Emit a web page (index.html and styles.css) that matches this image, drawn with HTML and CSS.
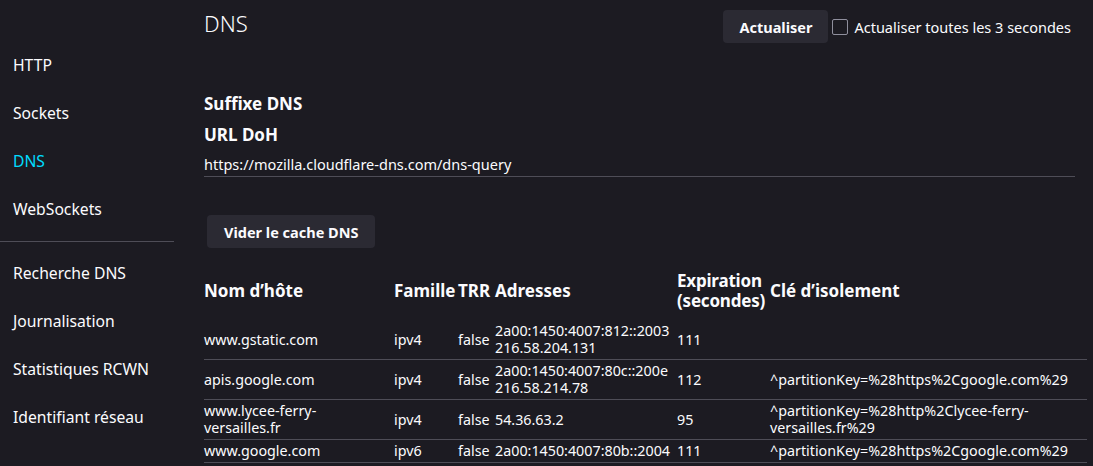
FILE: index.html
```html
<!DOCTYPE html>
<html lang="fr">
<head>
<meta charset="utf-8">
<title>about:networking</title>
<link rel="stylesheet" href="styles.css">
</head>
<body>
<div class="page">
  <nav class="sidebar">
    <div class="cat">HTTP</div>
    <div class="cat">Sockets</div>
    <div class="cat selected">DNS</div>
    <div class="cat">WebSockets</div>
    <div class="sep"></div>
    <div class="cat">Recherche DNS</div>
    <div class="cat">Journalisation</div>
    <div class="cat">Statistiques RCWN</div>
    <div class="cat">Identifiant réseau</div>
  </nav>
  <main class="main">
    <div class="header">
      <h1 class="title">DNS</h1>
      <div class="refresh">
        <button class="btn">Actualiser</button>
        <label class="auto"><span class="check"></span>Actualiser toutes les 3 secondes</label>
      </div>
    </div>
    <h2 class="subhead first">Suffixe DNS</h2>
    <h2 class="subhead">URL DoH</h2>
    <div class="url">https://mozilla.cloudflare-dns.com/dns-query</div>
    <button class="btn clear">Vider le cache DNS</button>
    <table class="dns">
      <colgroup>
        <col class="c-host"><col class="c-fam"><col class="c-trr"><col class="c-addr"><col class="c-exp"><col class="c-key">
      </colgroup>
      <thead>
        <tr>
          <th>Nom d’hôte</th>
          <th>Famille</th>
          <th>TRR</th>
          <th>Adresses</th>
          <th class="exp">Expiration<br>(secondes)</th>
          <th>Clé d’isolement</th>
        </tr>
      </thead>
      <tbody>
        <tr>
          <td>www.gstatic.com</td>
          <td>ipv4</td>
          <td>false</td>
          <td class="addr">2a00:1450:4007:812::2003<br>216.58.204.131</td>
          <td>111</td>
          <td></td>
        </tr>
        <tr>
          <td>apis.google.com</td>
          <td>ipv4</td>
          <td>false</td>
          <td class="addr">2a00:1450:4007:80c::200e<br>216.58.214.78</td>
          <td>112</td>
          <td>^partitionKey=%28https%2Cgoogle.com%29</td>
        </tr>
        <tr>
          <td>www.lycee-ferry-<br>versailles.fr</td>
          <td>ipv4</td>
          <td>false</td>
          <td class="addr">54.36.63.2</td>
          <td>95</td>
          <td>^partitionKey=%28http%2Clycee-ferry-<br>versailles.fr%29</td>
        </tr>
        <tr>
          <td>www.google.com</td>
          <td>ipv6</td>
          <td>false</td>
          <td class="addr">2a00:1450:4007:80b::2004</td>
          <td>111</td>
          <td>^partitionKey=%28https%2Cgoogle.com%29</td>
        </tr>
      </tbody>
    </table>
  </main>
</div>
</body>
</html>
```

FILE: styles.css
```css
* { box-sizing: border-box; }
html, body {
  margin: 0;
  padding: 0;
  background: #1c1b22;
  color: #fbfbfe;
  font-family: "Noto Sans", "Open Sans", sans-serif;
  overflow: hidden;
}
.page {
  display: flex;
  height: 466px;
}
.sidebar {
  width: 174px;
  flex: none;
  padding-top: 41px;
}
.cat {
  height: 48px;
  line-height: 48px;
  padding-left: 13px;
  font-size: 15.7px;
  color: #fbfbfe;
}
.cat.selected { color: #00ddff; }
.sep {
  height: 1px;
  background: #4e4d57;
  margin: 8px 0 7px;
}
.main {
  flex: 1;
  padding: 0 6px 0 30px;
  min-width: 0;
}
.header {
  display: flex;
  justify-content: space-between;
  align-items: flex-start;
  padding-top: 10px;
  margin-right: 16px;
}
.title {
  margin: 0;
  font-size: 22px;
  font-weight: 300;
  line-height: 26px;
}
.refresh {
  display: flex;
  align-items: center;
}
.btn {
  font-family: inherit;
  font-weight: 700;
  font-size: 14.5px;
  color: #fbfbfe;
  background: #2b2a33;
  border: none;
  border-radius: 4px;
  height: 33px;
  padding: 0 16px;
}
.auto {
  display: flex;
  align-items: center;
  font-size: 14.5px;
  margin-left: 4px;
}
.check {
  width: 16px;
  height: 16px;
  border: 1px solid #8f8f9d;
  border-radius: 2px;
  margin-right: 6px;
}
.subhead {
  margin: 0;
  font-size: 17px;
  font-weight: 700;
  line-height: 22px;
}
.subhead.first { margin-top: 50px; }
.subhead + .subhead { margin-top: 9px; }
.url {
  margin-top: 8px;
  margin-right: 12px;
  font-size: 14.5px;
  line-height: 20px;
  padding-bottom: 2px;
  border-bottom: 1px solid #4e4d57;
}
.clear {
  display: block;
  margin: 38px 0 0 3px;
  padding: 0 17px;
}
.dns {
  margin-top: 22px;
  width: 100%;
  border-collapse: collapse;
  table-layout: fixed;
  font-size: 14.3px;
}
.c-host { width: 190px; }
.c-fam { width: 64px; }
.c-trr { width: 37px; }
.c-addr { width: 182px; }
.c-exp { width: 93px; }
.dns th {
  text-align: left;
  font-weight: 700;
  font-size: 17px;
  line-height: 20px;
  padding: 1px 0 9px;
  vertical-align: middle;
  white-space: nowrap;
}
.dns th.exp { letter-spacing: -0.2px; }
.dns td {
  line-height: 17px;
  padding: 2px 0 3px;
  vertical-align: middle;
  border-bottom: 1px solid #4e4d57;
  white-space: nowrap;
}
```
